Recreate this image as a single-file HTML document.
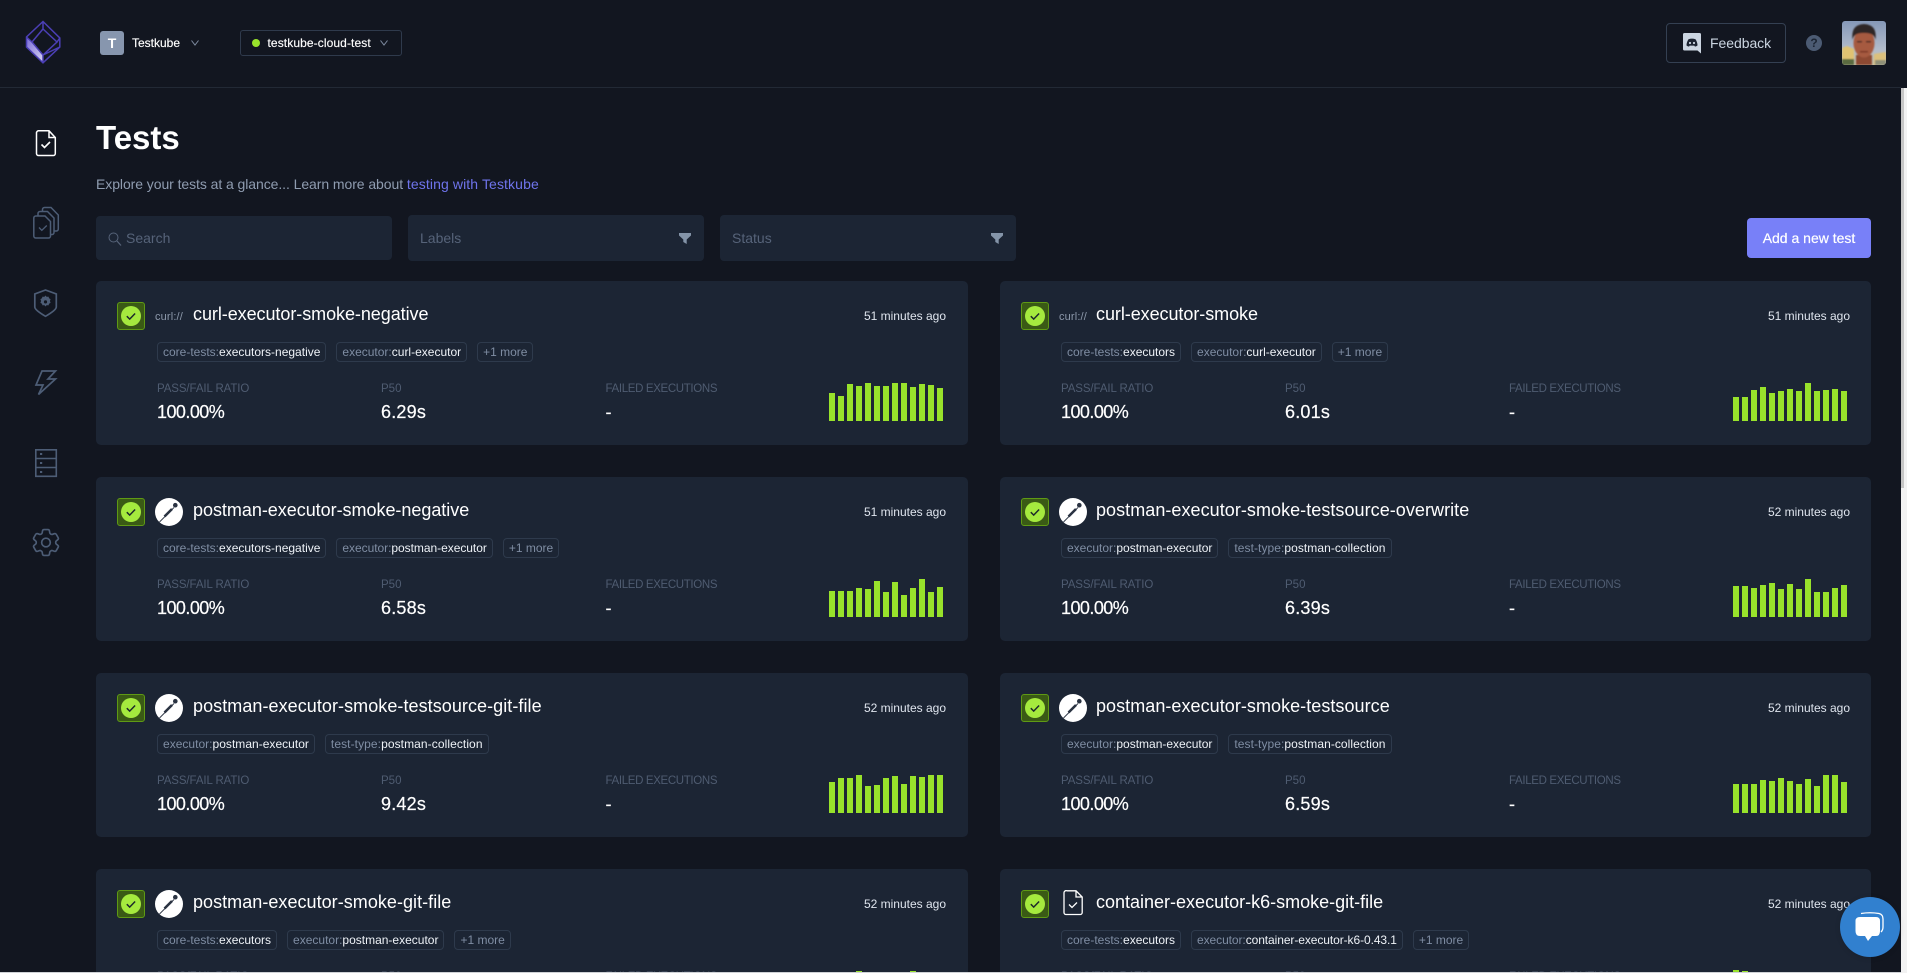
<!DOCTYPE html>
<html lang="en"><head><meta charset="utf-8"><title>Tests</title>
<style>
*{box-sizing:border-box}
html,body{margin:0;padding:0;width:1907px;height:973px;overflow:hidden;background:#121620}
body{position:relative;font-family:"Liberation Sans",sans-serif;color:#fff}
.a{position:absolute;white-space:nowrap}
.hdr{left:0;top:87px;width:1901px;height:1px;background:#222935}
.card{position:absolute;width:872px;height:164px;background:#1c2534;border-radius:5px}
.card.r{width:871px}
.st{position:absolute;left:21px;top:21px;width:28px;height:28px;background:#3a5a15;border:1px solid #5f9a14;border-radius:3px}
.st svg{position:absolute;left:-1px;top:-1px}
.ic{position:absolute;left:59px;top:21px;width:28px;height:28px}
.curl{font-size:11px;line-height:30px;color:#8d99ab;letter-spacing:.15px;white-space:nowrap}
.t{position:absolute;left:97px;top:22px;font-size:18px;line-height:22px;letter-spacing:.05px;white-space:nowrap}
.r .t{left:96px}
.t.cu{letter-spacing:-.06px}
.time{position:absolute;right:22px;top:28px;font-size:12px;line-height:14px;color:#dfe5ee;white-space:nowrap}
.r .time{right:21px}
.tags{position:absolute;left:61px;top:61px;display:flex;gap:10px}
.tag{height:20px;border:1px solid #2e3a4c;border-radius:4px;padding:0 5px;font-size:12px;line-height:18px;color:#7f8da3;white-space:nowrap}
.tag b{font-weight:400;color:#eef2f7}
.lb{position:absolute;top:101px;font-size:11.5px;line-height:14px;color:#4f5c71;white-space:nowrap;letter-spacing:-.1px}
.lb.c3{letter-spacing:-.35px}
.lb.c2{letter-spacing:0}
.v{position:absolute;top:120px;font-size:18px;line-height:22px;letter-spacing:.2px;white-space:nowrap;-webkit-text-stroke:.2px #fff}
.v.c1{letter-spacing:-.55px}
.c1{left:61px}.c2{left:285px}.c3{left:509.5px}
.r .c2{left:285px}.r .c3{left:509px}
.bars{position:absolute;left:733px;top:98px;height:42px;display:flex;gap:3px;align-items:flex-end}
.bars i{display:block;width:6px;background:#98e22b}
.inp{position:absolute;background:#1c2534;border-radius:4px;color:#566379;font-size:14px;line-height:46px;padding-left:12px}
</style></head>
<body>
<svg width="0" height="0" style="position:absolute">
<defs>
<linearGradient id="gem" x1="0" y1="0" x2="1" y2="1"><stop offset="0" stop-color="#7a6cd8"/><stop offset="1" stop-color="#d8d4f2"/></linearGradient>
<filter id="soft"><feGaussianBlur stdDeviation=".7"/></filter>
<symbol id="ok" viewBox="0 0 28 28"><circle cx="14" cy="14" r="10" fill="#a5ea3e"/><path d="M9.800 14.200l2.900 2.900 5.400-5.600" fill="none" stroke="#1d2a2a" stroke-width="1.500"/></symbol>
<symbol id="pm" viewBox="0 0 28 28"><circle cx="14" cy="14" r="14" fill="#fff"/><path d="M4.500 24L19 9.500" stroke="#2a3342" stroke-width=".9"/><path d="M9.500 18.500l7.500-7.500" stroke="#2a3342" stroke-width="2.600"/><circle cx="20.300" cy="7.200" r="2.300" fill="#2a3342"/></symbol>
</defs></svg>

<div class="a hdr"></div>
<svg class="a" style="left:0;top:0" width="90" height="600" viewBox="0 0 90 600" fill="none">
<path d="M26.500 37L32 42L43 55V63L26.500 47Z" fill="url(#gem)"/>
<path d="M43 21.500L59.800 38V47L43 62.800L26.500 47V37ZM43 29L57 42L43 55L32 42ZM43 21.500V29M59.800 38L57 42M59.800 47L43 55M26.500 37L32 42M43 55V62.800" stroke="#4b3fb5" stroke-width="1.500"/>
<path d="M39 130.800H49L55.300 137.500V153.500A2 2 0 0 1 53.300 155.500H38.500A2 2 0 0 1 36.500 153.500V133A2.200 2.200 0 0 1 39 130.800ZM49 130.800V137.500H55.300" stroke="#fff" stroke-width="1.500"/>
<path d="M41.500 144.500l3 3 5.500-5.500" stroke="#fff" stroke-width="1.600"/>
<g stroke="#4d5d76" stroke-width="1.500">
<path d="M35.800 216H45L50.500 221.500V236A2 2 0 0 1 48.500 238H35.800A2 2 0 0 1 33.800 236V218A2 2 0 0 1 35.800 216Z"/>
<path d="M38 216V213.500A2 2 0 0 1 40 211.500H47.500L54 218V232.500A2 2 0 0 1 52 234.500H50.500"/>
<path d="M42.500 211V209.500A2 2 0 0 1 44.500 207.500H51L58.300 215V229A2 2 0 0 1 56.500 231H54"/>
<path d="M39 227.500l2.800 2.800 5-4.800" stroke-width="1.300"/>
<path d="M45.500 290L56.300 294V307Q56.300 310 45.500 316.300Q34.800 310 34.800 307V294Z" stroke-width="1.700"/>
<path d="M42 371H55.500L48 379H55.500L38.500 394.500L43 385H36Z" stroke-width="1.700"/>
<path d="M35.800 449.800H56.300V476.300H35.800ZM35.800 458.500H56.300M35.800 467.500H56.300" stroke-width="1.600"/>
<g transform="translate(28.700,525.200) scale(1.440)" stroke-width="1.150"><path d="M9.594 3.940c.09-.542.56-.94 1.110-.94h2.593c.55 0 1.020.398 1.110.94l.213 1.281c.063.374.313.686.645.870.074.04.147.083.22.127.324.196.72.257 1.075.124l1.217-.456a1.125 1.125 0 011.370.49l1.296 2.247a1.125 1.125 0 01-.26 1.431l-1.003.827c-.293.24-.438.613-.431.992a6.759 6.759 0 010 .255c-.007.378.138.75.43.99l1.005.828c.424.35.534.954.26 1.430l-1.298 2.247a1.125 1.125 0 01-1.369.491l-1.217-.456c-.355-.133-.75-.072-1.076.124a6.570 6.570 0 01-.22.128c-.331.183-.581.495-.644.869l-.213 1.280c-.09.543-.56.941-1.110.941h-2.594c-.55 0-1.020-.398-1.110-.94l-.213-1.281c-.062-.374-.312-.686-.644-.870a6.520 6.520 0 01-.22-.127c-.325-.196-.72-.257-1.076-.124l-1.217.456a1.125 1.125 0 01-1.369-.49l-1.297-2.247a1.125 1.125 0 01.26-1.431l1.004-.827c.292-.24.437-.613.43-.992a6.932 6.932 0 010-.255c.007-.378-.138-.75-.43-.99l-1.004-.828a1.125 1.125 0 01-.26-1.430l1.297-2.247a1.125 1.125 0 011.370-.491l1.216.456c.356.133.751.072 1.076-.124.072-.044.146-.087.22-.128.332-.183.582-.495.644-.869l.214-1.281z"/><circle cx="12" cy="12" r="3"/></g>
</g>
<path d="M45.500 295.500l1.200 1.400 1.800-.3.600 1.700 1.500 1-.7 1.700.7 1.700-1.500 1-.6 1.700-1.800-.3-1.200 1.400-1.200-1.400-1.800.3-.6-1.700-1.500-1 .7-1.700-.7-1.700 1.500-1 .6-1.700 1.800.3z" fill="#4d5d76"/><circle cx="45.500" cy="301.900" r="1.600" fill="#121620"/>
<g fill="#4d5d76"><rect x="40" y="453" width="2.200" height="2"/><rect x="40" y="462" width="2.200" height="2"/><rect x="40" y="471" width="2.200" height="2"/></g>
</svg>

<div class="a" style="left:100px;top:31px;width:24px;height:24px;background:#8796ae;border-radius:3px;font-size:14px;font-weight:700;line-height:24px;text-align:center">T</div>
<div class="a" style="left:132px;top:36px;font-size:12px;line-height:14px;-webkit-text-stroke:.15px #fff">Testkube</div>
<svg class="a" style="left:191px;top:40px" width="8" height="6" fill="none"><path d="M.5.500L4 5 7.500.500" stroke="#7d8a9f"/></svg>
<div class="a" style="left:239.500px;top:30px;width:162px;height:26px;border:1px solid #2f3a4c;border-radius:3px"></div>
<div class="a" style="left:252px;top:39px;width:8px;height:8px;border-radius:50%;background:#98e22b"></div>
<div class="a" style="left:267.500px;top:36px;font-size:12px;line-height:14px;letter-spacing:.1px;-webkit-text-stroke:.15px #fff">testkube-cloud-test</div>
<svg class="a" style="left:380px;top:40px" width="8" height="6" fill="none"><path d="M.5.500L4 5 7.500.500" stroke="#7d8a9f"/></svg>

<div class="a" style="left:1666px;top:23px;width:120px;height:40px;border:1px solid #344052;border-radius:4px"></div>
<svg class="a" style="left:1683px;top:33px" width="18" height="21" viewBox="0 0 18 21"><path d="M1.500 0H16.500A1.500 1.500 0 0 1 18 1.500V20.500L14.500 17.500H1.500A1.500 1.500 0 0 1 0 16V1.500A1.500 1.500 0 0 1 1.500 0Z" fill="#cbd5e1"/><path d="M5.500 6.200Q9 5 12.500 6.200Q14.500 9 14.500 12.500Q13.300 13.500 12 13.600L11.300 12.600H6.700L6 13.600Q4.700 13.500 3.500 12.500Q3.500 9 5.500 6.200Z" fill="#1a2230"/><circle cx="7" cy="10" r="1.100" fill="#cbd5e1"/><circle cx="11" cy="10" r="1.100" fill="#cbd5e1"/></svg>
<div class="a" style="left:1710px;top:35px;font-size:14px;line-height:16px;color:#cbd5e1;letter-spacing:-.05px">Feedback</div>
<div class="a" style="left:1806px;top:35px;width:16px;height:16px;border-radius:50%;background:#4c5b73;color:#1c2534;font-size:12px;font-weight:700;line-height:16px;text-align:center">?</div>
<svg class="a" style="left:1842px;top:21px" width="44" height="44" viewBox="0 0 44 44"><defs><clipPath id="av"><rect width="44" height="44" rx="3"/></clipPath><linearGradient id="sky" x1="0" y1="0" x2="0" y2="1"><stop offset="0" stop-color="#8598b8"/><stop offset=".65" stop-color="#b3bccb"/><stop offset="1" stop-color="#c7bfa3"/></linearGradient></defs><g clip-path="url(#av)"><rect width="44" height="44" fill="url(#sky)"/><g filter="url(#soft)"><path d="M0 27L5 25L12 28V44H0Z" fill="#e0c272"/><path d="M32 33L44 31V44H32Z" fill="#dcc07c"/><rect y="38" width="12" height="6" fill="#5a6a40"/><rect x="33" y="39" width="11" height="5" fill="#8e8f78"/><rect x="14" y="34" width="16" height="10" fill="#8d4a31"/><ellipse cx="22" cy="22" rx="10.500" ry="14.500" fill="#a65a41"/><path d="M10.500 19Q8.500 3.500 22 3Q35.500 3.500 33.500 19Q32.500 11.500 22 12Q11.500 11.500 10.500 19Z" fill="#2d2828"/><rect x="15" y="20" width="5" height="1.500" fill="#4a2a25"/><rect x="24" y="20" width="5" height="1.500" fill="#4a2a25"/><rect x="18" y="30" width="8" height="1.500" fill="#7a3527"/></g></g></svg>

<div class="a" style="left:96px;top:118px;font-size:33px;line-height:40px;font-weight:700">Tests</div>
<div class="a" style="left:96px;top:176px;font-size:14px;line-height:16px;color:#8f9cb0;letter-spacing:-.07px">Explore your tests at a glance... Learn more about <span style="color:#6f74ec;letter-spacing:.11px">testing with Testkube</span></div>

<div class="inp" style="left:96px;top:216px;width:296px;height:44px;line-height:44px;padding-left:30px">Search</div>
<svg class="a" style="left:108px;top:232px" width="14" height="14" fill="none"><circle cx="5.500" cy="5.500" r="4.500" stroke="#566379"/><path d="M9 9l4 4.500" stroke="#566379" stroke-width="1.200"/></svg>
<div class="inp" style="left:408px;top:215px;width:296px;height:46px">Labels</div>
<svg class="a" style="left:679px;top:233px" width="12" height="11"><path d="M0 0H12V2.500L7.700 6.500V11L4.300 9V6.500L0 2.500Z" fill="#8494a8"/></svg>
<div class="inp" style="left:720px;top:215px;width:296px;height:46px">Status</div>
<svg class="a" style="left:991px;top:233px" width="12" height="11"><path d="M0 0H12V2.500L7.700 6.500V11L4.300 9V6.500L0 2.500Z" fill="#8494a8"/></svg>
<div class="a" style="left:1747px;top:218px;width:124px;height:40px;background:#7880f8;border-radius:4px;font-size:14px;line-height:40px;text-align:center;-webkit-text-stroke:.2px #fff">Add a new test</div>

<!-- Row 1 -->
<div class="card" style="left:96px;top:281px">
<div class="st"><svg width="28" height="28"><use href="#ok"/></svg></div>
<div class="ic curl">curl://</div>
<div class="t cu">curl-executor-smoke-negative</div><div class="time">51 minutes ago</div>
<div class="tags"><div class="tag">core-tests:<b>executors-negative</b></div><div class="tag">executor:<b>curl-executor</b></div><div class="tag">+1 more</div></div>
<div class="lb c1">PASS/FAIL RATIO</div><div class="lb c2">P50</div><div class="lb c3">FAILED EXECUTIONS</div>
<div class="v c1">100.00%</div><div class="v c2">6.29s</div><div class="v c3">-</div>
<div class="bars"><i style="height:28px"></i><i style="height:25px"></i><i style="height:37px"></i><i style="height:35px"></i><i style="height:38px"></i><i style="height:35px"></i><i style="height:35px"></i><i style="height:38px"></i><i style="height:38px"></i><i style="height:34px"></i><i style="height:37px"></i><i style="height:36px"></i><i style="height:33px"></i></div>
</div>
<div class="card r" style="left:1000px;top:281px">
<div class="st"><svg width="28" height="28"><use href="#ok"/></svg></div>
<div class="ic curl">curl://</div>
<div class="t cu">curl-executor-smoke</div><div class="time">51 minutes ago</div>
<div class="tags"><div class="tag">core-tests:<b>executors</b></div><div class="tag">executor:<b>curl-executor</b></div><div class="tag">+1 more</div></div>
<div class="lb c1">PASS/FAIL RATIO</div><div class="lb c2">P50</div><div class="lb c3">FAILED EXECUTIONS</div>
<div class="v c1">100.00%</div><div class="v c2">6.01s</div><div class="v c3">-</div>
<div class="bars"><i style="height:24px"></i><i style="height:24px"></i><i style="height:31px"></i><i style="height:34px"></i><i style="height:28px"></i><i style="height:30px"></i><i style="height:32px"></i><i style="height:30px"></i><i style="height:38px"></i><i style="height:30px"></i><i style="height:31px"></i><i style="height:32px"></i><i style="height:30px"></i></div>
</div>

<!-- Row 2 -->
<div class="card" style="left:96px;top:477px">
<div class="st"><svg width="28" height="28"><use href="#ok"/></svg></div>
<svg class="ic"><use href="#pm"/></svg>
<div class="t" style="letter-spacing:-.03px">postman-executor-smoke-negative</div><div class="time">51 minutes ago</div>
<div class="tags"><div class="tag">core-tests:<b>executors-negative</b></div><div class="tag" style="letter-spacing:-.04px">executor:<b>postman-executor</b></div><div class="tag">+1 more</div></div>
<div class="lb c1">PASS/FAIL RATIO</div><div class="lb c2">P50</div><div class="lb c3">FAILED EXECUTIONS</div>
<div class="v c1">100.00%</div><div class="v c2">6.58s</div><div class="v c3">-</div>
<div class="bars"><i style="height:26px"></i><i style="height:26px"></i><i style="height:26px"></i><i style="height:29px"></i><i style="height:28px"></i><i style="height:36px"></i><i style="height:25px"></i><i style="height:35px"></i><i style="height:22px"></i><i style="height:29px"></i><i style="height:38px"></i><i style="height:25px"></i><i style="height:30px"></i></div>
</div>
<div class="card r" style="left:1000px;top:477px">
<div class="st"><svg width="28" height="28"><use href="#ok"/></svg></div>
<svg class="ic"><use href="#pm"/></svg>
<div class="t">postman-executor-smoke-testsource-overwrite</div><div class="time">52 minutes ago</div>
<div class="tags"><div class="tag">executor:<b>postman-executor</b></div><div class="tag" style="letter-spacing:.06px">test-type:<b>postman-collection</b></div></div>
<div class="lb c1">PASS/FAIL RATIO</div><div class="lb c2">P50</div><div class="lb c3">FAILED EXECUTIONS</div>
<div class="v c1">100.00%</div><div class="v c2">6.39s</div><div class="v c3">-</div>
<div class="bars"><i style="height:31px"></i><i style="height:31px"></i><i style="height:29px"></i><i style="height:32px"></i><i style="height:34px"></i><i style="height:28px"></i><i style="height:33px"></i><i style="height:28px"></i><i style="height:38px"></i><i style="height:25px"></i><i style="height:25px"></i><i style="height:29px"></i><i style="height:32px"></i></div>
</div>

<!-- Row 3 -->
<div class="card" style="left:96px;top:673px">
<div class="st"><svg width="28" height="28"><use href="#ok"/></svg></div>
<svg class="ic"><use href="#pm"/></svg>
<div class="t" style="letter-spacing:.06px">postman-executor-smoke-testsource-git-file</div><div class="time">52 minutes ago</div>
<div class="tags"><div class="tag" style="letter-spacing:.02px">executor:<b>postman-executor</b></div><div class="tag" style="letter-spacing:.08px">test-type:<b>postman-collection</b></div></div>
<div class="lb c1">PASS/FAIL RATIO</div><div class="lb c2">P50</div><div class="lb c3">FAILED EXECUTIONS</div>
<div class="v c1">100.00%</div><div class="v c2">9.42s</div><div class="v c3">-</div>
<div class="bars"><i style="height:31px"></i><i style="height:35px"></i><i style="height:35px"></i><i style="height:38px"></i><i style="height:27px"></i><i style="height:28px"></i><i style="height:35px"></i><i style="height:37px"></i><i style="height:29px"></i><i style="height:37px"></i><i style="height:36px"></i><i style="height:38px"></i><i style="height:38px"></i></div>
</div>
<div class="card r" style="left:1000px;top:673px">
<div class="st"><svg width="28" height="28"><use href="#ok"/></svg></div>
<svg class="ic"><use href="#pm"/></svg>
<div class="t">postman-executor-smoke-testsource</div><div class="time">52 minutes ago</div>
<div class="tags"><div class="tag">executor:<b>postman-executor</b></div><div class="tag" style="letter-spacing:.06px">test-type:<b>postman-collection</b></div></div>
<div class="lb c1">PASS/FAIL RATIO</div><div class="lb c2">P50</div><div class="lb c3">FAILED EXECUTIONS</div>
<div class="v c1">100.00%</div><div class="v c2">6.59s</div><div class="v c3">-</div>
<div class="bars"><i style="height:29px"></i><i style="height:29px"></i><i style="height:29px"></i><i style="height:33px"></i><i style="height:32px"></i><i style="height:35px"></i><i style="height:32px"></i><i style="height:29px"></i><i style="height:34px"></i><i style="height:27px"></i><i style="height:38px"></i><i style="height:38px"></i><i style="height:31px"></i></div>
</div>

<!-- Row 4 -->
<div class="card" style="left:96px;top:869px">
<div class="st"><svg width="28" height="28"><use href="#ok"/></svg></div>
<svg class="ic"><use href="#pm"/></svg>
<div class="t" style="letter-spacing:.04px">postman-executor-smoke-git-file</div><div class="time">52 minutes ago</div>
<div class="tags"><div class="tag">core-tests:<b>executors</b></div><div class="tag">executor:<b>postman-executor</b></div><div class="tag">+1 more</div></div>
<div class="lb c1">PASS/FAIL RATIO</div><div class="lb c2">P50</div><div class="lb c3">FAILED EXECUTIONS</div>
<div class="v c1">100.00%</div><div class="v c2">6.40s</div><div class="v c3">-</div>
<div class="bars"><i style="height:28px"></i><i style="height:30px"></i><i style="height:30px"></i><i style="height:38px"></i><i style="height:30px"></i><i style="height:32px"></i><i style="height:30px"></i><i style="height:34px"></i><i style="height:30px"></i><i style="height:38px"></i><i style="height:34px"></i><i style="height:32px"></i><i style="height:30px"></i></div>
</div>
<div class="card r" style="left:1000px;top:869px">
<div class="st"><svg width="28" height="28"><use href="#ok"/></svg></div>
<svg class="ic" viewBox="0 0 28 28" fill="none"><path d="M8 .8H17L23.200 7V22.500A2 2 0 0 1 21.200 24.500H7A2 2 0 0 1 5 22.500V3A2.200 2.200 0 0 1 8 .8ZM17 .8V7H23.200" stroke="#fff" stroke-width="1.300"/><path d="M10 14.500l3 3 5-5" stroke="#fff" stroke-width="1.300"/></svg>
<div class="t" style="letter-spacing:0">container-executor-k6-smoke-git-file</div><div class="time">52 minutes ago</div>
<div class="tags"><div class="tag">core-tests:<b>executors</b></div><div class="tag" style="letter-spacing:-.08px">executor:<b>container-executor-k6-0.43.1</b></div><div class="tag">+1 more</div></div>
<div class="lb c1">PASS/FAIL RATIO</div><div class="lb c2">P50</div><div class="lb c3">FAILED EXECUTIONS</div>
<div class="v c1">100.00%</div><div class="v c2">6.38s</div><div class="v c3">-</div>
<div class="bars"><i style="height:39px"></i><i style="height:38px"></i><i style="height:37px"></i><i style="height:30px"></i><i style="height:37px"></i><i style="height:30px"></i><i style="height:30px"></i><i style="height:30px"></i><i style="height:30px"></i><i style="height:30px"></i><i style="height:30px"></i><i style="height:30px"></i><i style="height:37px"></i></div>
</div>

<!-- scrollbar -->
<div class="a" style="left:1901px;top:88px;width:6px;height:885px;background:#f2f2f2"></div>
<div class="a" style="left:1901px;top:88px;width:3px;height:400px;background:#c6c6c6"></div>
<div class="a" style="left:0;top:972px;width:1901px;height:1px;background:#cfd2d6"></div>

<!-- chat -->
<div class="a" style="left:1840px;top:897px;width:60px;height:60px;border-radius:50%;background:#3180cf;box-shadow:0 1px 6px rgba(0,0,0,.12)"></div>
<svg class="a" style="left:1852px;top:910px" width="36" height="36" viewBox="0 0 36 36" fill="none">
<path d="M9 3.500Q18 2 27 3.500Q31 4.500 31 9V17Q31 20 29 22" stroke="#fff" stroke-width="1.300"/>
<path d="M8 7H24Q28 7 28 11V21Q28 26 24 26H20L16 31 13 26H8Q3.500 26 3.500 21V11Q3.500 7 8 7Z" fill="#fff"/>
</svg>
</body></html>
